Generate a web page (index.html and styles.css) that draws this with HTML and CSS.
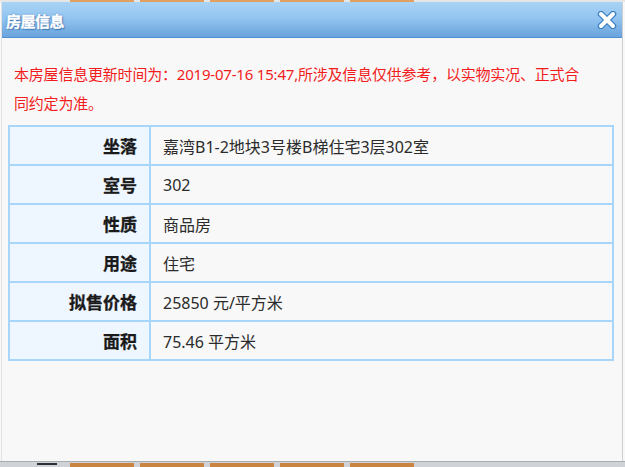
FILE: index.html
```html
<!DOCTYPE html>
<html lang="zh-CN">
<head>
<meta charset="utf-8">
<title>房屋信息</title>
<link rel="stylesheet" href="styles.css">
</head>
<body>
<div class="page">
  <div class="strip strip-top">
    <span class="gap-a"></span><span class="blk"></span><span class="blk"></span><span class="blk"></span><span class="blk"></span><span class="blk"></span>
  </div>
  <div class="dialog">
    <div class="titlebar">
      <span class="title">房屋信息</span>
      <span class="close" aria-label="关闭">
        <svg width="20" height="18" viewBox="0 0 20 18">
          <path d="M4 3 L16 15 M16 3 L4 15" stroke="#3b7fc4" stroke-width="6.5" stroke-linecap="round" fill="none"/>
          <path d="M4 3 L16 15 M16 3 L4 15" stroke="#ffffff" stroke-width="4" stroke-linecap="round" fill="none"/>
        </svg>
      </span>
    </div>
    <div class="content">
      <p class="notice">本房屋信息更新时间为：2019-07-16 15:47,所涉及信息仅供参考，以实物实况、正式合<br>同约定为准。</p>
      <table class="info">
        <tr><th>坐落</th><td>嘉湾B1-2地块3号楼B梯住宅3层302室</td></tr>
        <tr><th>室号</th><td>302</td></tr>
        <tr><th>性质</th><td>商品房</td></tr>
        <tr><th>用途</th><td>住宅</td></tr>
        <tr><th>拟售价格</th><td>25850 元/平方米</td></tr>
        <tr><th>面积</th><td>75.46 平方米</td></tr>
      </table>
    </div>
  </div>
  <div class="strip strip-bottom">
    <span class="gap-a"><span class="dash"></span></span><span class="blk"></span><span class="blk"></span><span class="blk"></span><span class="blk"></span><span class="blk"></span>
  </div>
</div>
</body>
</html>
```
FILE: styles.css
```css
html, body {
  margin: 0;
  padding: 0;
  background: #f8f8f8;
}
.page {
  width: 625px;
  height: 467px;
  overflow: hidden;
  display: flex;
  flex-direction: column;
  font-family: "Noto Sans", "Noto Sans CJK SC", sans-serif;
}
.strip {
  display: flex;
  gap: 6px;
  flex: none;
}
.strip-top {
  height: 2px;
  background: #e4e6e8;
}
.strip-bottom {
  height: 5px;
  border-top: 1px solid #a9acaf;
  background: #cfd3d7;
  padding-top: 1px;
  box-sizing: border-box;
  height: 6px;
}
.gap-a {
  width: 64px;
  flex: none;
  display: flex;
}
.dash {
  width: 20px;
  height: 2px;
  margin-left: 37px;
  background: #2a3036;
}
.blk {
  width: 64px;
  flex: none;
  background: #c98442;
}
.strip-top .blk {
  background: #e2a060;
}
.dialog {
  flex: 1;
  display: flex;
  flex-direction: column;
  border-left: 1px solid #e2e2e2;
  border-right: 1px solid #cfcfcf;
  margin: 0 2px 0 1px;
  min-height: 0;
}
.titlebar {
  height: 35px;
  flex: none;
  display: flex;
  align-items: center;
  justify-content: space-between;
  padding: 0 5px 0 4px;
  background: linear-gradient(#a9d3f5 0%, #93c5f0 45%, #78afe3 80%, #6aa4dd 100%);
  border-bottom: 1px solid #4d8fd2;
}
.title {
  color: #ffffff;
  font-family: "Noto Sans CJK SC", sans-serif;
  font-weight: bold;
  font-size: 15px;
  letter-spacing: -0.5px;
  -webkit-text-stroke: 0.4px #ffffff;
  text-shadow: 0 0 2px #2a64a8, 1px 1px 1px #3670b0;
  margin-top: 1px;
}
.close {
  display: flex;
  width: 20px;
  height: 18px;
}
.content {
  flex: 1;
  background: #f8f8f8;
  padding: 22px 7px 0 6px;
}
.notice {
  margin: 0 0 7px 6px;
  color: #f21c1c;
  font-size: 15px;
  line-height: 29px;
  letter-spacing: -0.2px;
  white-space: nowrap;
}
.info {
  width: 606px;
  border-collapse: collapse;
  border: 2px solid #9fd2fb;
  font-size: 16px;
}
.info th, .info td {
  border: 2px solid #a8d6fb;
  height: 37px;
  padding: 0;
}
.info th {
  width: 127px;
  padding-right: 12px;
  text-align: right;
  background: #eef6ff;
  color: #1a1a1a;
  font-weight: bold;
  font-size: 17px;
  -webkit-text-stroke: 0.3px #1a1a1a;
  font-family: "Noto Sans CJK SC", sans-serif;
}
.info td {
  padding-left: 12px;
  text-align: left;
  background: #f8f8f8;
  color: #2b2b2b;
}
```
